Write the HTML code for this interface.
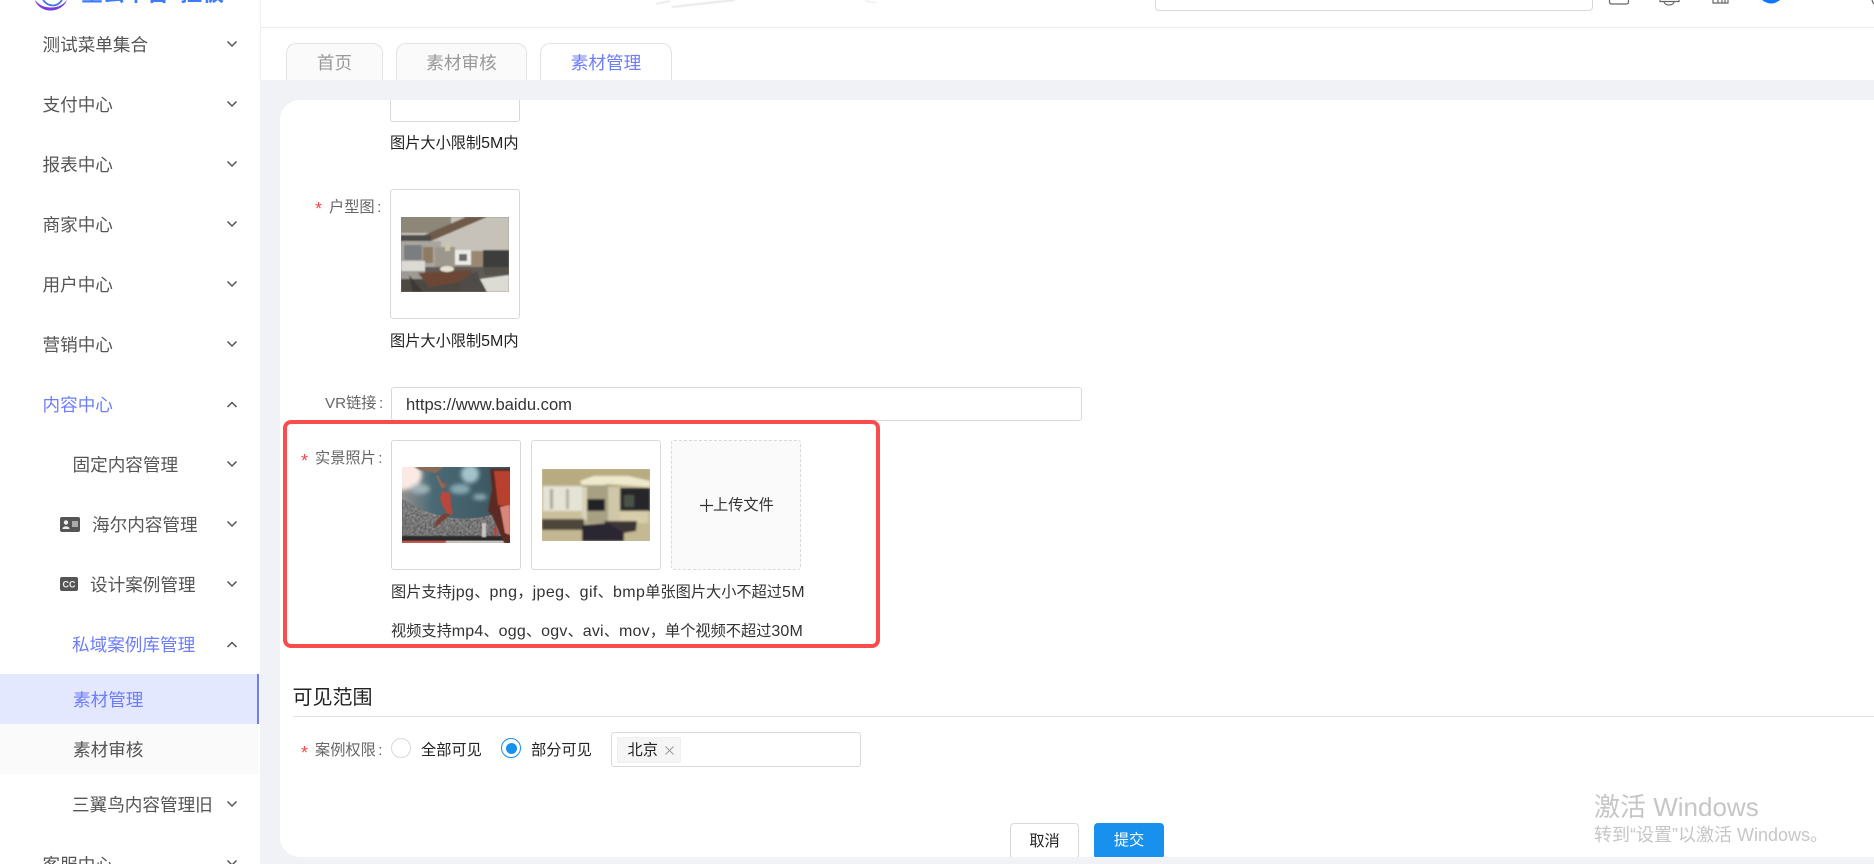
<!DOCTYPE html>
<html lang="zh"><head><meta charset="utf-8"><title>素材管理</title>
<style>
*{box-sizing:border-box}
html,body{margin:0;padding:0;width:1874px;height:864px;overflow:hidden;background:#fff}
body{position:relative;font-family:"Liberation Sans","Noto Sans CJK SC",sans-serif;font-size:15px;color:#333}
.a{position:absolute}
.t{position:absolute;white-space:nowrap;line-height:24px;height:24px;margin-top:-10.8px}
.m{font-size:17.6px;color:#555}
.act{color:#6c7dff}
.lab{color:#666;font-size:15.2px}
.lab i{font-style:normal;margin-left:2.5px}
.star{color:#f5484d;font-size:18px;margin-top:-10px}
.dark{color:#222;font-size:15.2px}
.l{font-size:16px}
.l1 .l{letter-spacing:.4px}
.l2 .l{letter-spacing:.2px}
.box{position:absolute;border:1px solid #d9d9d9;border-radius:3px;background:#fff}
.tab{position:absolute;top:43px;height:37px;border:1px solid #e2e2e2;border-bottom:0;border-radius:10px 10px 0 0;background:#fafafa;color:#999;font-size:17.6px;line-height:38px;text-align:center}
svg{display:block}
.ch{position:absolute;width:12px;height:8px;margin-top:1px;margin-left:-.5px}
</style></head><body>

<!-- main backdrop -->
<div class="a" style="left:260px;top:80px;width:1614px;height:784px;background:#f0f2f5"></div>
<div class="a" style="left:260px;top:0;width:1614px;height:80px;background:#fff"></div>
<div class="a" style="left:260px;top:27px;width:1614px;height:1px;background:#ececec"></div>
<div class="a" style="left:260px;top:0;width:1px;height:80px;background:#eef0f3"></div>

<!-- logo -->
<svg class="a" style="left:34px;top:0" width="34" height="11" viewBox="0 0 34 11"><path d="M1 0C2 5 9 11 17 10.500C24 10.500 31 6 33 0C29 5 24 7.500 17 7.500C10 7.500 5 5 1 0Z" fill="#7a3cdc"/><path d="M9 0C12 4 15 5.500 19 5.500C23 5.500 26 3 28 0" fill="none" stroke="#3f74e8" stroke-width="1.800"/></svg>
<div class="a" style="left:81px;top:0;width:146px;height:6px;overflow:hidden"><div class="a" style="left:0;top:-18px;font-size:22px;line-height:24px;font-weight:bold;color:#3d7bff;white-space:nowrap">星云平台<span style="margin-left:11px">拉板</span></div></div>

<!-- header -->
<svg class="a" style="left:640px;top:0" width="240" height="16" viewBox="0 0 240 16"><g filter="url(#bl)" fill="none" stroke="#e6e6e6"><path d="M16 4L30 1" stroke-width="1.600"/><path d="M32 7L95 0" stroke-width="1.800"/><path d="M225 1L236 3" stroke-width="1"/></g><defs><filter id="bl"><feGaussianBlur stdDeviation=".6"/></filter></defs></svg>
<div class="a" style="left:1155px;top:-10px;width:438px;height:21px;border:1px solid #d8d8d8;border-radius:4px"></div>
<svg class="a" style="left:1600px;top:0" width="274" height="12" viewBox="0 0 274 12" fill="none" stroke="#666" stroke-width="1.200"><path d="M9.500 0V2Q9.500 4 12 4H26Q28.500 4 28.500 2V0"/><path d="M60 0V1.500H79V0M64 2C65 6 73 6 74 2"/><path d="M113 0V3H128V0M118 0V3M122 0V3M125 0V3"/><path d="M162 0Q171 7 180 0Z" fill="#0d78ff" stroke="none"/><path d="M272 0Q273 3 274 4"/></svg>

<!-- sidebar -->
<div class="t m" style="left:42.500px;top:44px">测试菜单集合</div>
<div class="t m" style="left:42.500px;top:104px">支付中心</div>
<div class="t m" style="left:42.500px;top:164px">报表中心</div>
<div class="t m" style="left:42.500px;top:224px">商家中心</div>
<div class="t m" style="left:42.500px;top:284px">用户中心</div>
<div class="t m" style="left:42.500px;top:344px">营销中心</div>
<div class="t m act" style="left:42.500px;top:404px">内容中心</div>
<div class="t m" style="left:72.500px;top:464px">固定内容管理</div>
<div class="t m" style="left:92px;top:524px">海尔内容管理</div>
<div class="t m" style="left:90px;top:584px">设计案例管理</div>
<div class="t m act" style="left:72px;top:644px">私域案例库管理</div>
<div class="a" style="left:0;top:674px;width:259px;height:50px;background:#e4e8fe;border-right:2px solid #6c7dff"></div>
<div class="t m act" style="left:73px;top:699px">素材管理</div>
<div class="a" style="left:0;top:724px;width:259px;height:50px;background:#fafafa"></div>
<div class="t m" style="left:73px;top:749px">素材审核</div>
<div class="t m" style="left:72px;top:804px">三翼鸟内容管理旧</div>
<div class="t m" style="left:42.500px;top:864px">客服中心</div>

<!-- chevrons -->
<svg class="ch" style="left:226px;top:39px" viewBox="0 0 12 8"><path d="M1.500 1.500L6 6L10.500 1.500" fill="none" stroke="#555" stroke-width="1.500"/></svg>
<svg class="ch" style="left:226px;top:99px" viewBox="0 0 12 8"><path d="M1.500 1.500L6 6L10.500 1.500" fill="none" stroke="#555" stroke-width="1.500"/></svg>
<svg class="ch" style="left:226px;top:159px" viewBox="0 0 12 8"><path d="M1.500 1.500L6 6L10.500 1.500" fill="none" stroke="#555" stroke-width="1.500"/></svg>
<svg class="ch" style="left:226px;top:219px" viewBox="0 0 12 8"><path d="M1.500 1.500L6 6L10.500 1.500" fill="none" stroke="#555" stroke-width="1.500"/></svg>
<svg class="ch" style="left:226px;top:279px" viewBox="0 0 12 8"><path d="M1.500 1.500L6 6L10.500 1.500" fill="none" stroke="#555" stroke-width="1.500"/></svg>
<svg class="ch" style="left:226px;top:339px" viewBox="0 0 12 8"><path d="M1.500 1.500L6 6L10.500 1.500" fill="none" stroke="#555" stroke-width="1.500"/></svg>
<svg class="ch" style="left:226px;top:400px" viewBox="0 0 12 8"><path d="M1.500 6L6 1.500L10.500 6" fill="none" stroke="#555" stroke-width="1.500"/></svg>
<svg class="ch" style="left:226px;top:459px" viewBox="0 0 12 8"><path d="M1.500 1.500L6 6L10.500 1.500" fill="none" stroke="#555" stroke-width="1.500"/></svg>
<svg class="ch" style="left:226px;top:519px" viewBox="0 0 12 8"><path d="M1.500 1.500L6 6L10.500 1.500" fill="none" stroke="#555" stroke-width="1.500"/></svg>
<svg class="ch" style="left:226px;top:579px" viewBox="0 0 12 8"><path d="M1.500 1.500L6 6L10.500 1.500" fill="none" stroke="#555" stroke-width="1.500"/></svg>
<svg class="ch" style="left:226px;top:640px" viewBox="0 0 12 8"><path d="M1.500 6L6 1.500L10.500 6" fill="none" stroke="#555" stroke-width="1.500"/></svg>
<svg class="ch" style="left:226px;top:799px" viewBox="0 0 12 8"><path d="M1.500 1.500L6 6L10.500 1.500" fill="none" stroke="#555" stroke-width="1.500"/></svg>
<svg class="ch" style="left:226px;top:858px" viewBox="0 0 12 8"><path d="M1.500 1.500L6 6L10.500 1.500" fill="none" stroke="#555" stroke-width="1.500"/></svg>

<!-- sidebar icons -->
<svg class="a" style="left:60px;top:517px" width="20" height="16" viewBox="0 0 20 16"><rect width="20" height="15" rx="2" fill="#555"/><circle cx="6" cy="5.500" r="2.200" fill="#eee"/><path d="M2.500 12C2.500 8.500 9.500 8.500 9.500 12Z" fill="#eee"/><rect x="12" y="4" width="6" height="6" fill="#aaa"/></svg>
<svg class="a" style="left:60px;top:577px" width="18" height="15" viewBox="0 0 18 15"><rect width="18" height="14" rx="2" fill="#555"/><text x="9" y="10.500" text-anchor="middle" font-family="Liberation Sans" font-weight="bold" font-size="9" fill="#eee">CC</text></svg>

<!-- tabs -->
<div class="tab" style="left:286px;width:97px">首页</div>
<div class="tab" style="left:396px;width:131px">素材审核</div>
<div class="tab" style="left:540px;width:132px;background:#fff;color:#6c7dff">素材管理</div>

<!-- card -->
<div class="a" style="left:280px;top:100px;width:1594px;height:757px;background:#fff;border-radius:20px 0 0 20px"></div>

<!-- form top -->
<div class="a" style="left:390px;top:90px;width:130px;height:32px;border:1px solid #d9d9d9;border-radius:3px;clip-path:inset(10px -1px -1px -1px)"></div>
<div class="t dark" style="left:390px;top:143px">图片大小限制<span class="l">5M</span>内</div>

<div class="t star" style="left:315px;top:207px">*</div>
<div class="t lab" style="left:329px;top:207px">户型图<i>:</i></div>
<div class="box" style="left:390px;top:189px;width:130px;height:130px"></div>
<svg class="a" style="left:401px;top:217px" width="108" height="75" viewBox="0 0 108 75">
<defs><filter id="f2"><feGaussianBlur stdDeviation=".8"/></filter></defs>
<rect width="108" height="75" fill="#8b857a"/>
<g filter="url(#f2)">
<rect width="108" height="34" fill="#c6c2b9"/>
<rect width="50" height="16" fill="#8c8779"/>
<path d="M19 20L65 0H86L30 24Z" fill="#6f5a49"/>
<rect x="0" y="18" width="30" height="6" fill="#4e4c48"/>
<rect x="0" y="24" width="40" height="26" fill="#a9a69f"/>
<rect x="3" y="28" width="18" height="15" fill="#7a7e80"/>
<rect x="22" y="30" width="10" height="16" fill="#8e7a63"/>
<rect x="34" y="30" width="20" height="22" fill="#9b978c"/>
<rect x="54" y="33" width="16" height="15" fill="#ecebe7"/><rect x="58" y="37" width="8" height="7" fill="#6a6a66"/>
<rect x="70" y="34" width="12" height="18" fill="#9a8872"/>
<rect x="82" y="33" width="26" height="19" fill="#3e3d3b"/>
<rect x="0" y="44" width="24" height="10" fill="#dcdad5"/>
<rect x="24" y="50" width="84" height="14" fill="#5e5a54"/>
<rect x="0" y="54" width="24" height="21" fill="#9d9a94"/>
<rect x="0" y="62" width="108" height="13" fill="#4c4843"/>
<path d="M17 56L72 53L66 64L28 70Z" fill="#6d4636"/>
<ellipse cx="46" cy="52" rx="7" ry="3" fill="#e6e1d2"/>
<path d="M8 58L22 75H12Z" fill="#3a3734"/>
<path d="M60 62L76 54L82 75L60 75Z" fill="#4f4c48"/>
<path d="M79 62L108 58V75H86Z" fill="#dcdbd4"/>
<path d="M82 50H108V58L84 58Z" fill="#55514b"/>
<rect x="44" y="26" width="5" height="8" fill="#cfc6ae"/>
</g></svg>
<div class="t dark" style="left:390px;top:341px">图片大小限制<span class="l">5M</span>内</div>

<div class="t lab" style="left:325px;top:403px">VR链接<i>:</i></div>
<div class="box" style="left:391px;top:387px;width:691px;height:34px"></div>
<div class="t" style="left:406px;top:404px;font-size:16.600px;color:#333">https://www.baidu.com</div>

<!-- red highlight -->
<div class="a" style="left:283px;top:420px;width:597px;height:228px;border:4px solid #f94c4c;border-radius:8px"></div>

<div class="t star" style="left:301px;top:459px">*</div>
<div class="t lab" style="left:315px;top:458px">实景照片<i>:</i></div>
<div class="box" style="left:391px;top:440px;width:130px;height:130px"></div>
<div class="box" style="left:531px;top:440px;width:130px;height:130px"></div>
<div class="a" style="left:671px;top:440px;width:130px;height:130px;background:#fafafa;border:1px dashed #d9d9d9;border-radius:3px"></div>
<svg class="a" style="left:700px;top:498px" width="13" height="14" viewBox="0 0 13 14"><path d="M0 7.500H13M6.500 1V14" stroke="#333" stroke-width="1.200"/></svg>
<div class="t" style="left:713px;top:505px;font-size:15.200px;color:#333">上传文件</div>

<svg class="a" style="left:402px;top:467px" width="108" height="76" viewBox="0 0 108 76">
<defs><filter id="f1"><feGaussianBlur stdDeviation="2"/></filter><filter id="f1b"><feGaussianBlur stdDeviation=".6"/></filter>
<filter id="nz" x="0" y="0" width="100%" height="100%"><feTurbulence type="fractalNoise" baseFrequency=".6" numOctaves="2" seed="4"/><feColorMatrix values="0 0 0 0 .9  0 0 0 0 .9  0 0 0 0 .9  1 0 0 0 -.2"/><feGaussianBlur stdDeviation=".45"/></filter>
<linearGradient id="s1" x1="0" x2="1" y1="0" y2="0"><stop offset="0" stop-color="#93908f"/><stop offset=".28" stop-color="#4a6a76"/><stop offset="1" stop-color="#3a525c"/></linearGradient>
<linearGradient id="c1" x1="0" x2="0" y1="0" y2="1"><stop offset="0" stop-color="#4e5054"/><stop offset="1" stop-color="#3c3b3b"/></linearGradient>
<clipPath id="cc"><path d="M0 32Q45 60 88 48L108 50V76H0Z"/></clipPath></defs>
<rect width="108" height="76" fill="url(#s1)"/>
<g filter="url(#f1)"><ellipse cx="0" cy="8" rx="20" ry="15" fill="#fbeae4"/><ellipse cx="68" cy="7" rx="9" ry="9" fill="#a5c3cb"/><ellipse cx="58" cy="22" rx="10" ry="5" fill="#87a9b2"/><ellipse cx="78" cy="30" rx="7" ry="3" fill="#90b0b8"/><ellipse cx="18" cy="22" rx="10" ry="5" fill="#9eb2b6"/></g>
<g clip-path="url(#cc)"><rect width="108" height="76" fill="url(#c1)"/><rect y="25" width="108" height="51" filter="url(#nz)"/></g>
<g filter="url(#f1b)">
<path d="M12 0H42L34 6L18 3Z" fill="#8b6a57"/>
<rect x="0" y="69" width="108" height="5" fill="#2c2b2b"/><rect x="0" y="74" width="108" height="2" fill="#dcd7d2"/><rect x="0" y="74" width="44" height="2" fill="#d85a52"/>
<path d="M40 24L48 26L49 38L51 48L45 46L41 40L38 32Z" fill="#b9463a"/>
<circle cx="42" cy="18" r="2.600" fill="#8c5f4d"/><path d="M40 22L34 9L36 8L42 20Z" fill="#9a6854"/>
<path d="M42 46L48 48L36 58L32 62L34 54Z" fill="#7a4032"/>
<path d="M88 2H108V76H102L96 62L90 48L86 44L90 22Z" fill="#5c2a22"/>
<path d="M92 4H108V40L96 38Z" fill="#b8402f"/>
<path d="M98 40L108 38V68L103 66Z" fill="#d9857a"/>
<rect x="80" y="56" width="4" height="14" fill="#c9c5c1"/><rect x="92" y="60" width="3" height="9" fill="#b2453a"/>
</g></svg>

<svg class="a" style="left:542px;top:469px" width="108" height="72" viewBox="0 0 108 72">
<defs><filter id="f3"><feGaussianBlur stdDeviation="1"/></filter></defs>
<rect width="108" height="72" fill="#c9bf98"/>
<g filter="url(#f3)">
<rect width="108" height="18" fill="#b8ab82"/>
<path d="M38 12L52 7H86L108 12V18L66 15L42 20Z" fill="#eee9cc"/>
<rect x="1" y="17" width="41" height="25" fill="#e4e3d6"/>
<rect x="8" y="20" width="3" height="20" fill="#a9a795"/><rect x="24" y="20" width="3" height="20" fill="#b4b2a0"/>
<rect x="40" y="16" width="26" height="38" fill="#a8a083"/>
<rect x="40" y="18" width="5" height="34" fill="#d8d2b6"/>
<rect x="45" y="30" width="18" height="12" fill="#232427"/>
<rect x="66" y="18" width="12" height="34" fill="#cfc8a8"/>
<rect x="78" y="19" width="30" height="23" fill="#26272a"/>
<rect x="82" y="26" width="10" height="12" fill="#4b5348"/>
<rect x="1" y="42" width="39" height="9" fill="#cbc09c"/>
<rect x="0" y="50" width="42" height="11" fill="#4d473b"/>
<rect x="0" y="61" width="42" height="11" fill="#c2b792"/>
<rect x="42" y="54" width="66" height="18" fill="#c4b993"/>
<rect x="78" y="42" width="28" height="12" fill="#d8cdaa"/>
<path d="M62 52H95L94 62L70 66Z" fill="#3c3436"/>
<path d="M40 56L66 54L82 64L82 72H40Z" fill="#2c2830"/>
</g></svg>

<div class="t l1" style="left:391px;top:592px;font-size:15.200px;color:#333">图片支持<span class="l">jpg</span>、<span class="l">png</span>，<span class="l">jpeg</span>、<span class="l">gif</span>、<span class="l">bmp</span>单张图片大小不超过<span class="l">5M</span></div>
<div class="t l2" style="left:391px;top:631px;font-size:15.200px;color:#333">视频支持<span class="l">mp4</span>、<span class="l">ogg</span>、<span class="l">ogv</span>、<span class="l">avi</span>、<span class="l">mov</span>，单个视频不超过<span class="l">30M</span></div>

<!-- visibility -->
<div class="t" style="left:292.500px;top:697px;font-size:20px;color:#222">可见范围</div>
<div class="a" style="left:293px;top:716px;width:1581px;height:1px;background:#e0e0e0"></div>
<div class="t star" style="left:301px;top:751px">*</div>
<div class="t lab" style="left:315px;top:750px">案例权限<i>:</i></div>
<div class="a" style="left:391px;top:738px;width:20px;height:20px;border:1px solid #d9d9d9;border-radius:50%"></div>
<div class="t dark" style="left:421px;top:750px">全部可见</div>
<div class="a" style="left:501px;top:738px;width:20px;height:20px;border:1px solid #1890ee;border-radius:50%"></div>
<div class="a" style="left:505.500px;top:742.500px;width:11px;height:11px;background:#1890ee;border-radius:50%"></div>
<div class="t dark" style="left:531px;top:750px">部分可见</div>
<div class="box" style="left:611px;top:732px;width:250px;height:35px"></div>
<div class="a" style="left:617px;top:737px;width:64px;height:26px;background:#f5f5f5;border:1px solid #efefef;border-radius:2px"></div>
<div class="t dark" style="left:627.500px;top:750px">北京</div>
<svg class="a" style="left:665px;top:746px" width="9" height="9" viewBox="0 0 9 9"><path d="M.5 .5L8.500 8.500M8.500 .5L.5 8.500" stroke="#999" stroke-width="1"/></svg>

<!-- buttons -->
<div class="a" style="left:1010px;top:823px;width:69px;height:36px;border:1px solid #d9d9d9;border-radius:4px;background:#fff;text-align:center;line-height:35px;font-size:15.200px;color:#222">取消</div>
<div class="a" style="left:1094px;top:823px;width:70px;height:36px;border-radius:4px;background:#1890ee;text-align:center;line-height:35px;font-size:15.200px;color:#fff">提交</div>
<div class="a" style="left:280px;top:857px;width:1594px;height:7px;background:#f0f2f5"></div>

<!-- activation watermark -->
<div class="t" style="left:1594px;top:806px;font-size:26px;color:#c6c6c6;line-height:30px;height:30px;margin-top:-14px">激活 Windows</div>
<div class="t" style="left:1594px;top:834px;font-size:18px;color:#c6c6c6">转到“设置”以激活 Windows。</div>
</body></html>
